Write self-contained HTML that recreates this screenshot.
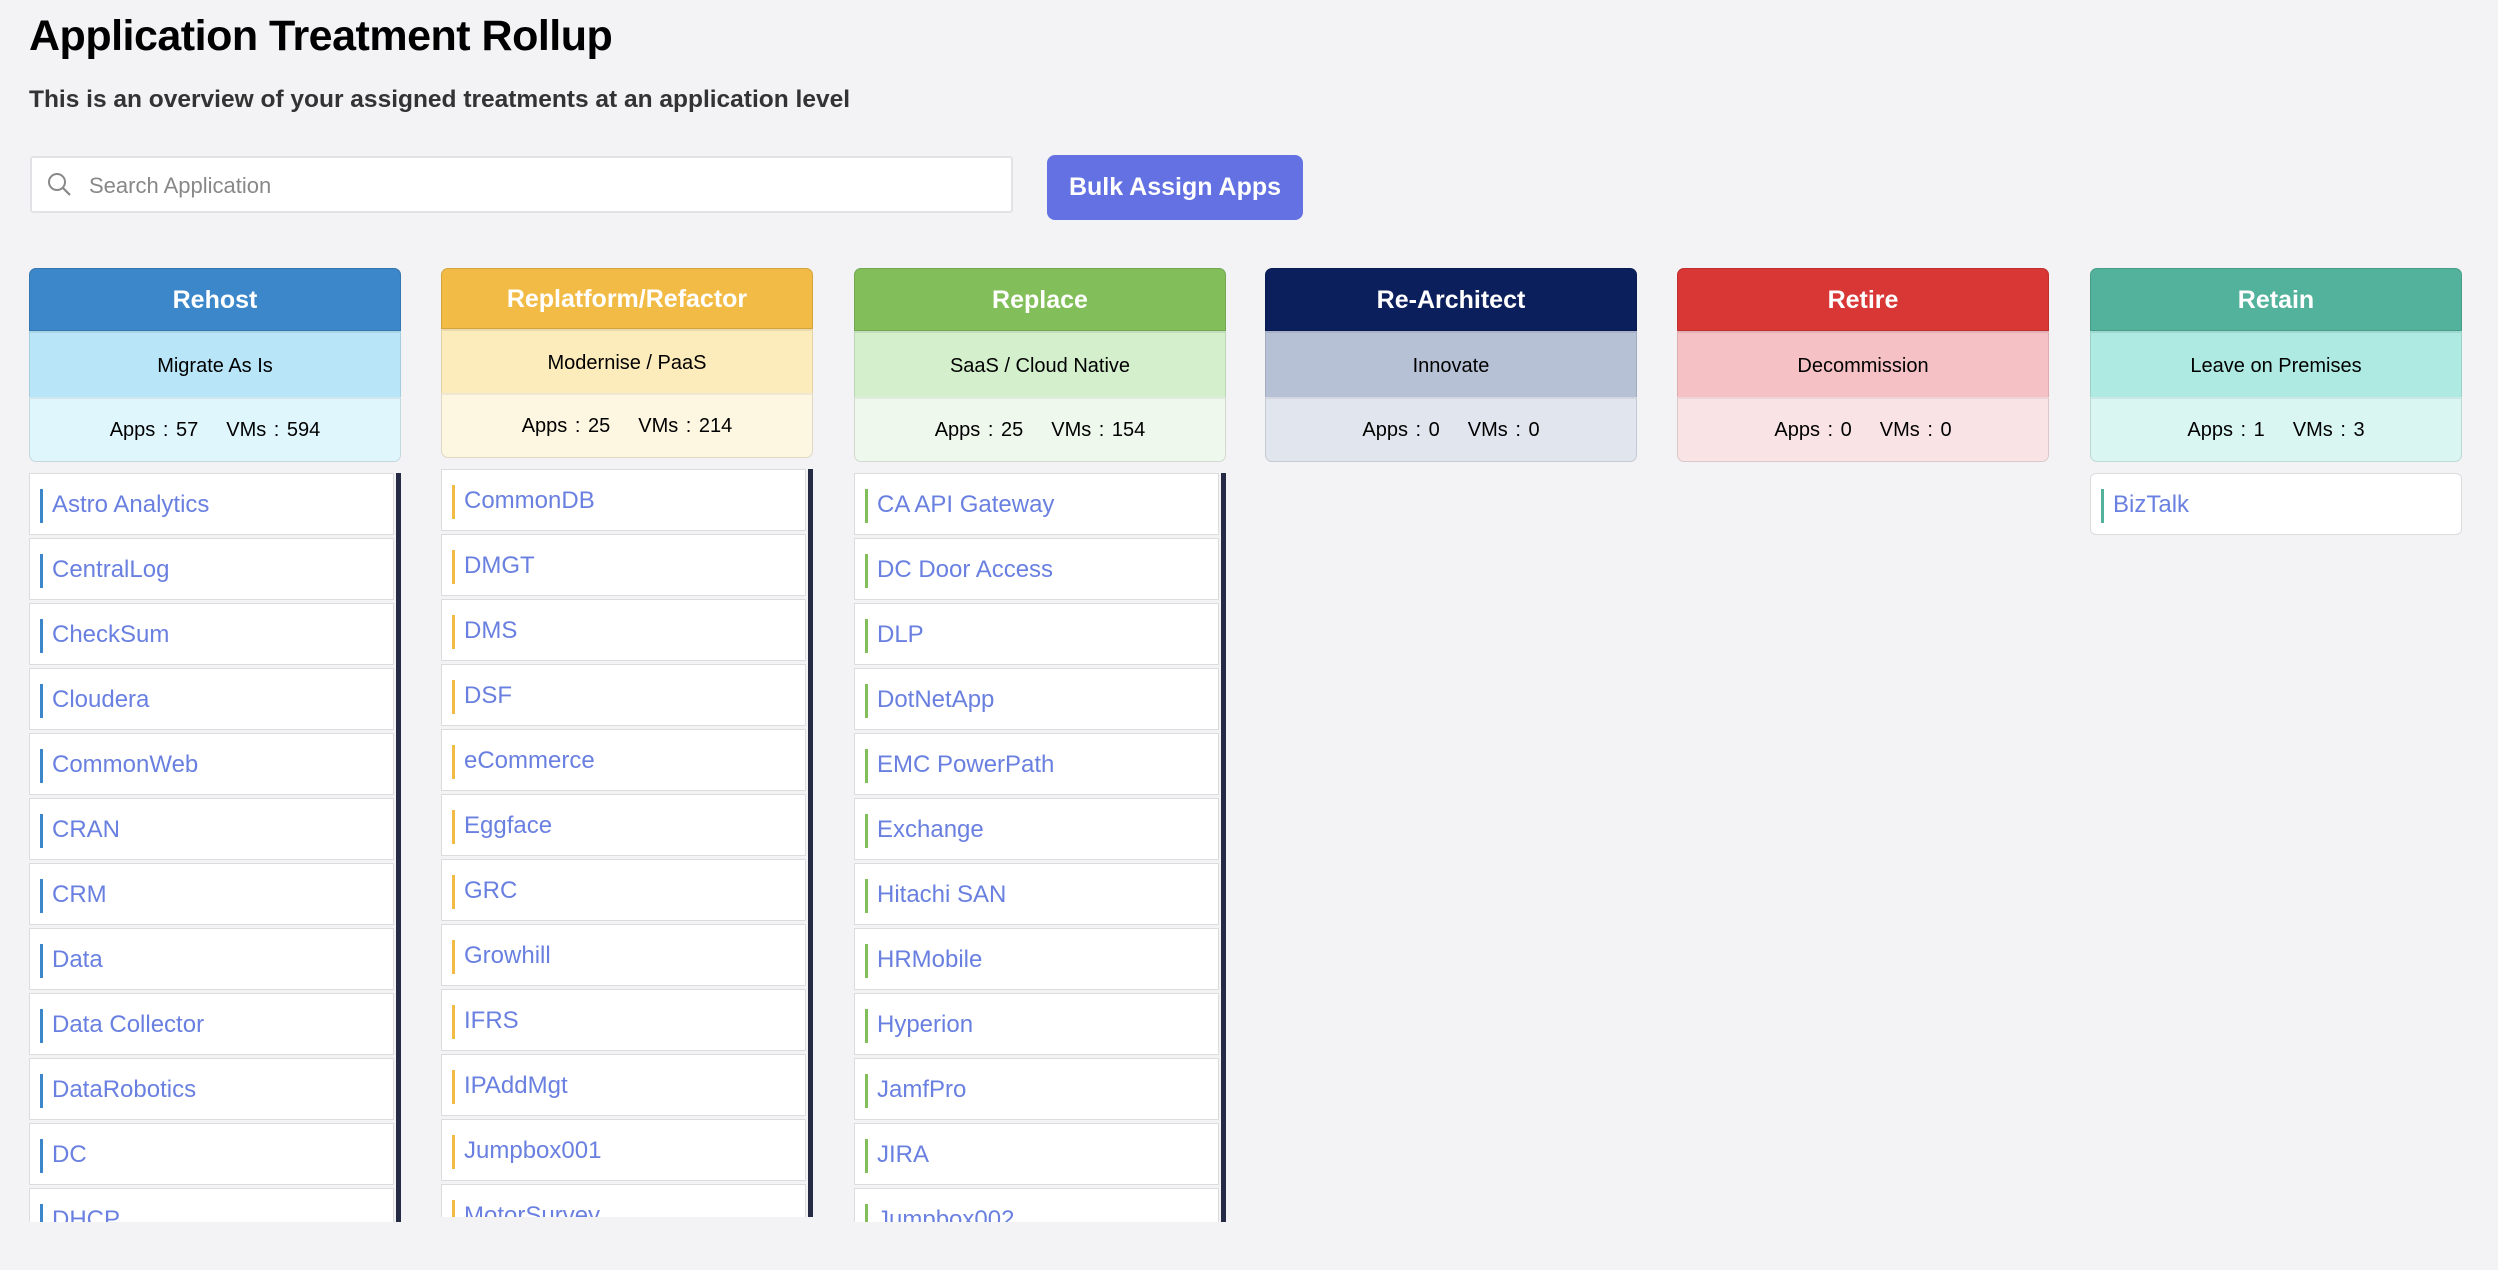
<!DOCTYPE html>
<html><head><meta charset="utf-8"><style>
*{box-sizing:border-box;margin:0;padding:0}
body{width:2498px;height:1270px;background:#f3f2f5;font-family:"Liberation Sans",sans-serif;position:relative;overflow:hidden}
h1{position:absolute;left:29px;top:12px;font-size:43px;font-weight:bold;color:#000;letter-spacing:-0.5px}
.sub{position:absolute;left:29px;top:86px;font-size:24.5px;font-weight:bold;color:#333}
.search{position:absolute;left:30px;top:156px;width:983px;height:57px;background:#fff;border:2px solid #e2e2e6;border-radius:3px}
.search span{position:absolute;left:57px;top:15px;font-size:22px;color:#888}
.search svg{position:absolute;left:14px;top:13px}
.btn{position:absolute;left:1047px;top:155px;width:256px;height:65px;background:#6371e2;border-radius:8px;color:#fff;font-size:25px;font-weight:bold;text-align:center;line-height:65px}
.col{position:absolute;top:268px;width:372px}
.hd{height:63px;border-radius:7px 7px 0 0;color:#fff;font-weight:bold;font-size:25px;text-align:center;line-height:63px;border:1px solid rgba(0,0,0,.12)}
.b2{height:66px;font-size:20px;text-align:center;line-height:66px;color:#000;border-left:1px solid rgba(0,0,0,.1);border-right:1px solid rgba(0,0,0,.1);border-top:2px solid rgba(0,0,0,.08)}
.b3{height:65px;font-size:20px;text-align:center;line-height:63px;color:#000;border-radius:0 0 7px 7px;border:1px solid rgba(0,0,0,.12);border-top:2px solid rgba(0,0,0,.06);word-spacing:2px}
.b3 b{font-weight:normal;margin:0 14px}
.list{position:absolute;top:473px;height:749px;width:372px;overflow:hidden}
.list.sb{border-right:5px solid #262b45}
.it{height:62px;background:#fff;border:1px solid #dcdcdc;margin-bottom:3px;margin-right:2px;position:relative;font-size:24px;color:#6a80e0;line-height:62px;padding-left:22px}
.it:before{content:"";position:absolute;left:10px;top:15px;width:3px;height:34px;background:var(--c)}
</style></head><body>
<h1>Application Treatment Rollup</h1>
<div class="sub">This is an overview of your assigned treatments at an application level</div>
<div class="search"><svg width="28" height="28" viewBox="0 0 28 28"><circle cx="11" cy="11" r="8" fill="none" stroke="#888" stroke-width="2"/><line x1="17" y1="17" x2="24" y2="24" stroke="#888" stroke-width="2.2"/></svg><span>Search Application</span></div>
<div class="btn">Bulk Assign Apps</div>

<div class="col" style="left:29px"><div class="hd" style="background:#3c87c9">Rehost</div><div class="b2" style="background:#b8e6f8">Migrate As Is</div><div class="b3" style="background:#dff6fd">Apps : 57<b></b>VMs : 594</div></div>
<div class="col" style="left:441px"><div class="hd" style="background:#f2bb45;height:61px;line-height:61px">Replatform/Refactor</div><div class="b2" style="background:#fdecbb;height:64px;line-height:64px">Modernise / PaaS</div><div class="b3" style="background:#fdf6e1">Apps : 25<b></b>VMs : 214</div></div>
<div class="col" style="left:854px"><div class="hd" style="background:#82bf5b">Replace</div><div class="b2" style="background:#d3efcc">SaaS / Cloud Native</div><div class="b3" style="background:#eef8ec">Apps : 25<b></b>VMs : 154</div></div>
<div class="col" style="left:1265px"><div class="hd" style="background:#0b1f5c">Re-Architect</div><div class="b2" style="background:#b7c1d6">Innovate</div><div class="b3" style="background:#e1e5ee">Apps : 0<b></b>VMs : 0</div></div>
<div class="col" style="left:1677px"><div class="hd" style="background:#d93636">Retire</div><div class="b2" style="background:#f5c1c5">Decommission</div><div class="b3" style="background:#fae3e5">Apps : 0<b></b>VMs : 0</div></div>
<div class="col" style="left:2090px"><div class="hd" style="background:#52b29b">Retain</div><div class="b2" style="background:#aeeae1">Leave on Premises</div><div class="b3" style="background:#d9f6f2">Apps : 1<b></b>VMs : 3</div></div>

<div class="list sb" style="left:29px;--c:#3c87c9"><div class="it">Astro Analytics</div><div class="it">CentralLog</div><div class="it">CheckSum</div><div class="it">Cloudera</div><div class="it">CommonWeb</div><div class="it">CRAN</div><div class="it">CRM</div><div class="it">Data</div><div class="it">Data Collector</div><div class="it">DataRobotics</div><div class="it">DC</div><div class="it">DHCP</div></div>
<div class="list sb" style="left:441px;top:469px;height:748px;--c:#f2bb45"><div class="it">CommonDB</div><div class="it">DMGT</div><div class="it">DMS</div><div class="it">DSF</div><div class="it">eCommerce</div><div class="it">Eggface</div><div class="it">GRC</div><div class="it">Growhill</div><div class="it">IFRS</div><div class="it">IPAddMgt</div><div class="it">Jumpbox001</div><div class="it">MotorSurvey</div></div>
<div class="list sb" style="left:854px;--c:#82bf5b"><div class="it">CA API Gateway</div><div class="it">DC Door Access</div><div class="it">DLP</div><div class="it">DotNetApp</div><div class="it">EMC PowerPath</div><div class="it">Exchange</div><div class="it">Hitachi SAN</div><div class="it">HRMobile</div><div class="it">Hyperion</div><div class="it">JamfPro</div><div class="it">JIRA</div><div class="it">Jumpbox002</div></div>
<div class="list" style="left:2090px;--c:#52b29b;height:70px"><div class="it" style="margin-right:0;border-radius:6px">BizTalk</div></div>
</body></html>
